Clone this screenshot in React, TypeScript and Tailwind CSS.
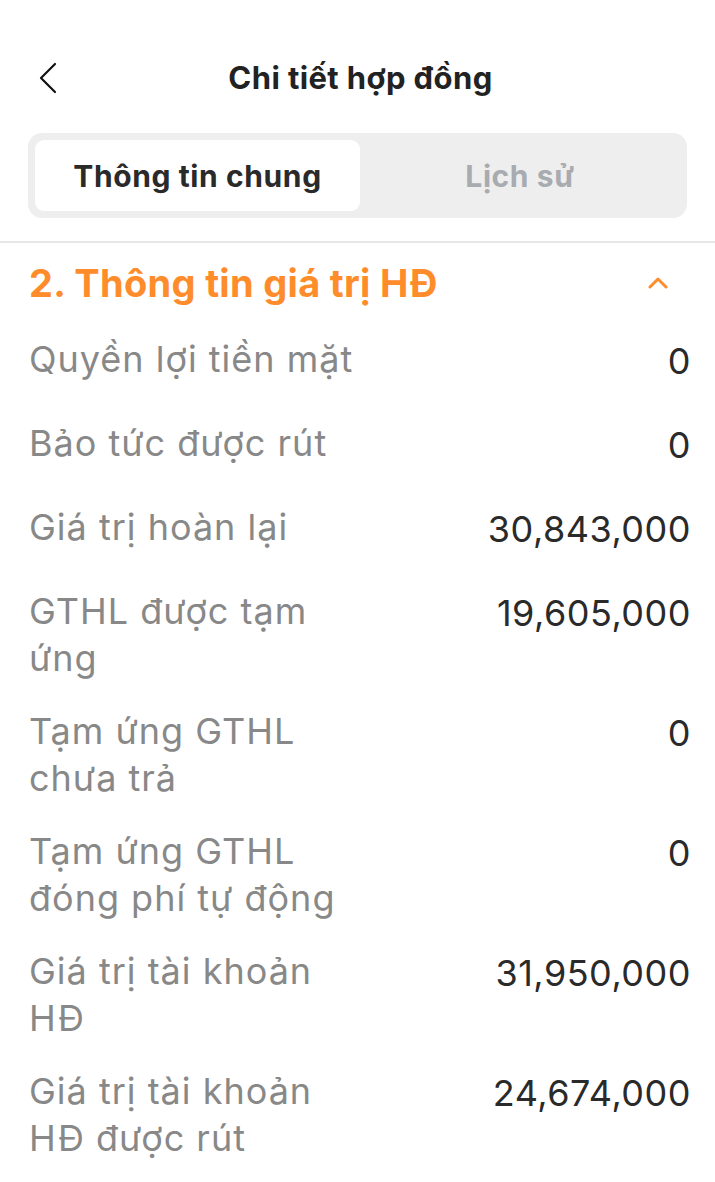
import React from "react";

type Row = { label: string[]; value: string };

const rows: Row[] = [
  { label: ["Quyền lợi tiền mặt"], value: "0" },
  { label: ["Bảo tức được rút"], value: "0" },
  { label: ["Giá trị hoàn lại"], value: "30,843,000" },
  { label: ["GTHL được tạm", "ứng"], value: "19,605,000" },
  { label: ["Tạm ứng GTHL", "chưa trả"], value: "0" },
  { label: ["Tạm ứng GTHL", "đóng phí tự động"], value: "0" },
  { label: ["Giá trị tài khoản", "HĐ"], value: "31,950,000" },
  { label: ["Giá trị tài khoản", "HĐ được rút"], value: "24,674,000" },
];

export default function App() {
  return (
    <div className="w-[715px] h-[1182px] overflow-hidden bg-white font-['Inter','Roboto',sans-serif]">
      {/* Header */}
      <div className="pt-[48px] h-[108px] grid grid-cols-[90px_1fr_90px] items-center">
        <div className="pl-[38px] flex items-center h-[60px]">
          <svg width="20" height="32" viewBox="0 0 20 32" fill="none">
            <path d="M17 2 L3 16 L17 30" stroke="#111" strokeWidth="2.2" strokeLinecap="round" strokeLinejoin="round" />
          </svg>
        </div>
        <div className="text-center text-[31px] tracking-[0.4px] font-bold text-[#222222] leading-[60px] pl-[6px]">
          Chi tiết hợp đồng
        </div>
        <div />
      </div>

      {/* Tabs */}
      <div className="mt-[25px] mx-[28px] h-[85px] rounded-[14px] bg-[#eeeeee] p-[7px] flex">
        <div className="w-[325px] h-[71px] rounded-[9px] bg-white flex items-center justify-center pt-[2px] text-[30px] tracking-[0.6px] font-bold text-[#2a2a2a]">
          Thông tin chung
        </div>
        <div className="flex-1 flex items-center justify-center pt-[2px] text-[30px] tracking-[0.6px] font-bold text-[#a8abb0]">
          Lịch sử
        </div>
      </div>

      {/* Divider */}
      <div className="mt-[23px] h-[2px] bg-[#e6e6e6]" />

      {/* Section header */}
      <div className="h-[80px] pl-[29px] pr-[47px] flex items-center justify-between">
        <div className="text-[38px] tracking-[0.3px] font-bold text-[#ff8c2b]">2. Thông tin giá trị HĐ</div>
        <svg width="20" height="12" viewBox="0 0 20 12" fill="none">
          <path d="M2 10 L10 2 L18 10" stroke="#ff8c2b" strokeWidth="3" strokeLinecap="round" strokeLinejoin="round" />
        </svg>
      </div>

      {/* Rows */}
      <div className="pl-[29px] pr-[24px]">
        {rows.map((r, i) => (
          <div key={i} className="flex justify-between items-start py-[13px]">
            <div className="text-[36px] tracking-[1px] leading-[47px] text-[#888888] whitespace-nowrap">
              {r.label.map((l, j) => (
                <div key={j}>{l}</div>
              ))}
            </div>
            <div className="text-[36px] tracking-[0.5px] leading-[50px] pb-[8px] text-[#2a2a2a] whitespace-nowrap">
              {r.value}
            </div>
          </div>
        ))}
      </div>
    </div>
  );
}
